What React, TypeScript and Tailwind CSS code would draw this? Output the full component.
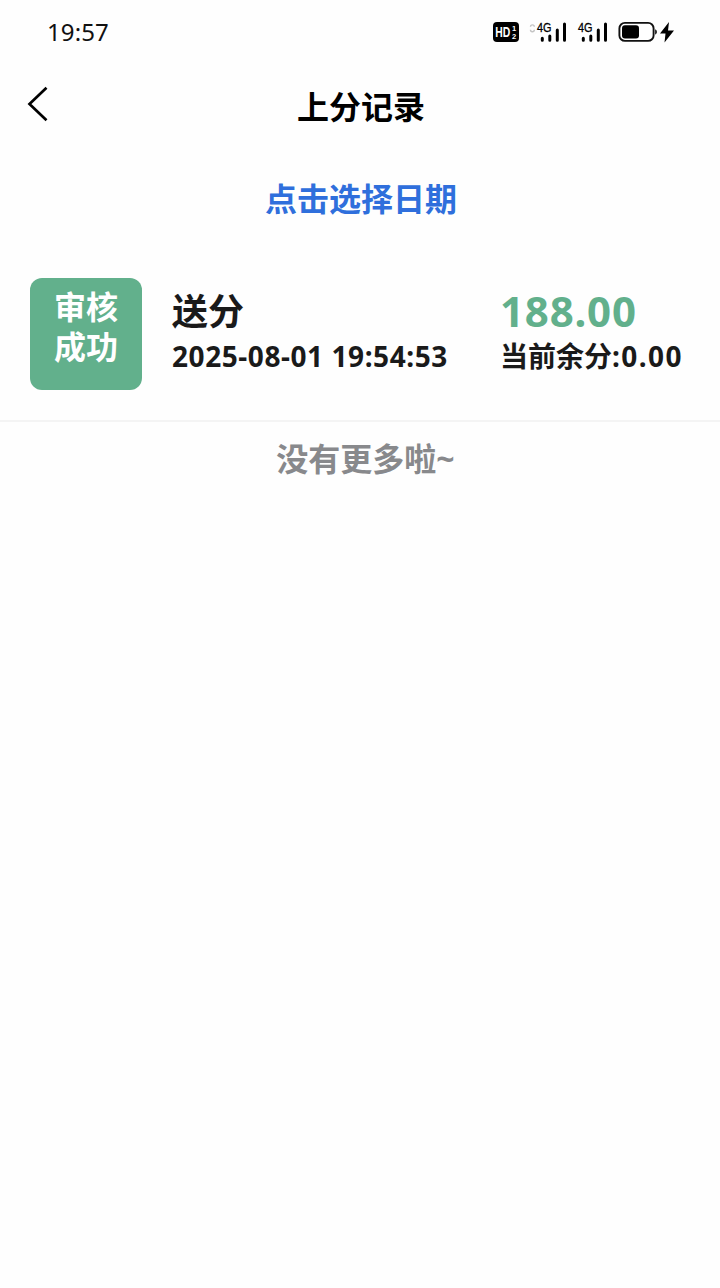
import { clsx } from "clsx";

const records = [
  {
    status: "审核成功",
    title: "送分",
    time: "2025-08-01 19:54:53",
    amount: "188.00",
    balance: "0.00",
  },
];

const Signal = ({ roaming = false }: { roaming?: boolean }) => (
  <svg
    className={clsx("h-[30px] overflow-visible", roaming ? "w-[38px]" : "w-[30px]")}
    viewBox={roaming ? "-8 -3 38 30" : "0 -3 30 30"}
  >
    {roaming && (
      <path d="M-6.5 6.8a1.9 1.9 0 0 1 3.8 0M-6.5 9.8a1.9 1.9 0 0 0 3.8 0" fill="none" stroke="#c4c4c4" strokeWidth="1.4" />
    )}
    <text
      x="0"
      y="12"
      textLength="14.5"
      lengthAdjust="spacingAndGlyphs"
      className="fill-black font-['Liberation_Sans',sans-serif] text-[13px] font-normal [stroke:#000] [stroke-width:0.3px]"
    >
      4G
    </text>
    <g stroke="#000" strokeWidth="3" strokeLinecap="round">
      <path d="M5.3 18.2v2M12.8 16v4.2M20.3 10v10.2M27.5 4V20.2" />
    </g>
  </svg>
);

const StatusBar = () => (
  <div className="flex h-[64px] items-center pl-[47px] pr-[44px]">
    <span className="font-['Noto_Sans',sans-serif] text-[24px] font-normal leading-[62px] tracking-[0.1px] text-[#111]">19:57</span>
    <div className="ml-auto flex items-center">
      <svg className="h-[20px] w-[26px]" viewBox="0 0 26 20">
        <rect width="26" height="20" rx="4" fill="#000" />
        <text x="2.2" y="15.3" textLength="15" lengthAdjust="spacingAndGlyphs" className="fill-white font-['Liberation_Sans',sans-serif] text-[15px] font-bold">HD</text>
        <text x="19" y="8.8" className="fill-white font-['Liberation_Sans',sans-serif] text-[7.5px] font-bold">1</text>
        <text x="19" y="17" className="fill-white font-['Liberation_Sans',sans-serif] text-[7.5px] font-bold">2</text>
      </svg>
      <div className="ml-[10px] flex gap-[11px]">
        <Signal roaming />
        <Signal />
      </div>
      <svg className="ml-[10px] h-[24px] w-[58px]" viewBox="0 0 58 24">
        <rect x="1.4" y="2.9" width="34.2" height="18" rx="5.5" fill="#fff" stroke="#111" strokeWidth="1.9" />
        <rect x="4" y="5.3" width="17" height="13.2" rx="3" fill="#000" />
        <path d="M37.2 9.3a3 3 0 0 1 0 5.4z" fill="#000" />
        <path d="M51 2 42 13.5h5.5L46.5 22.5 56 10.5h-6z" fill="#000" />
      </svg>
    </div>
  </div>
);

const Header = () => (
  <header className="grid h-[84px] grid-cols-[60px_1fr_60px] items-center">
    <button aria-label="返回" className="pb-[6px] pl-[27px]">
      <svg className="h-[36px] w-[22px]" viewBox="0 0 22 36" fill="none" stroke="#000" strokeWidth="2.7">
        <path d="M19.5 1.8 2.5 18l17 16.2" />
      </svg>
    </button>
    <h1 className="pl-[2px] text-center text-[32px] font-bold leading-[86px] text-black">上分记录</h1>
  </header>
);

export default function App() {
  return (
    <div className="min-h-[1288px] w-[720px] bg-[#fefefe] font-['Noto_Sans','Noto_Sans_CJK_SC',sans-serif] font-bold text-[#1a1a1a]">
      <StatusBar />
      <Header />

      <div className="flex h-[100px] justify-center pl-[2px]">
        <button className="text-[32px] leading-[102px] text-[#2f6fdc]">点击选择日期</button>
      </div>

      {records.map((item) => (
        <div key={item.time} className="flex h-[174px] border-b-2 border-[#f4f4f4] pl-[30px] pt-[30px]">
          <div className="h-[112px] w-[112px] rounded-[12px] bg-[#62b08c] px-[24px] pt-[9px] text-[32px] leading-[40px] text-white">
            {item.status}
          </div>
          <div className="ml-[30px] w-[328px] pt-[10px]">
            <div className="text-[36px] leading-[48px]">{item.title}</div>
            <div className="whitespace-nowrap text-[28px] leading-[40px] tracking-[0.56px]">{item.time}</div>
          </div>
          <div className="pt-[10px]">
            <div className="text-[42px] leading-[46px] tracking-[0.8px] text-[#62b08c]">{item.amount}</div>
            <div className="whitespace-nowrap text-[28px] leading-[44px]">
              当前余分<span className="tracking-[1.4px]">:{item.balance}</span>
            </div>
          </div>
        </div>
      ))}

      <p className="pl-[11px] text-center text-[32px] leading-[74px] text-[#88898c]">没有更多啦~</p>
    </div>
  );
}
